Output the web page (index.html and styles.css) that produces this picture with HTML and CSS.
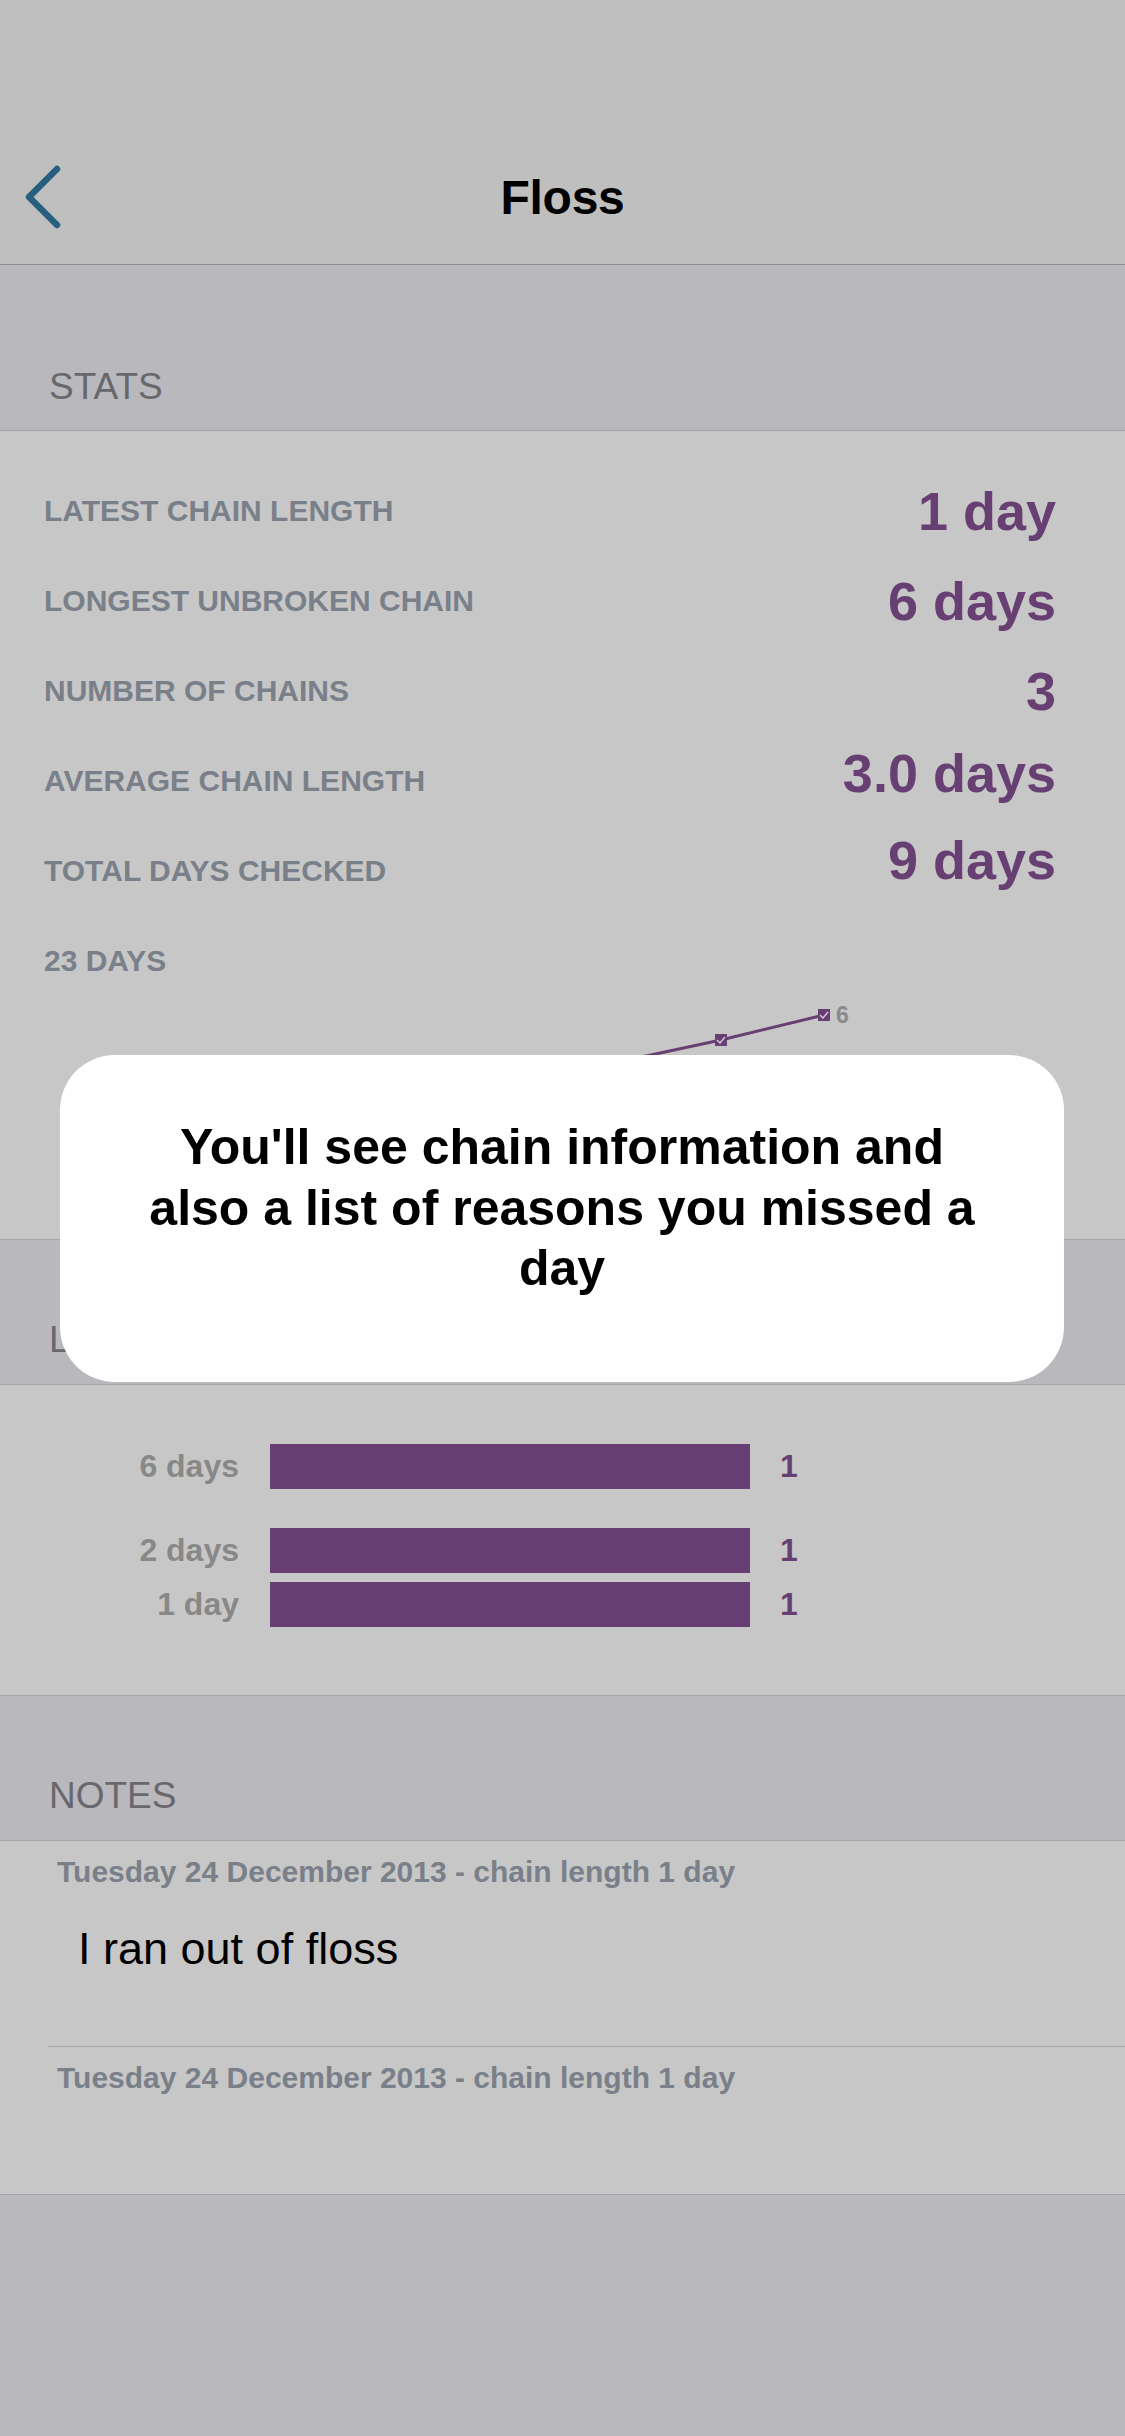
FILE: index.html
```html
<!DOCTYPE html>
<html lang="en">
<head>
<meta charset="utf-8">
<title>Floss</title>
<link rel="stylesheet" href="styles.css">
</head>
<body>
<div class="screen">
  <header class="nav">
    <div class="nav-bar">
      <svg class="back" width="40" height="70" viewBox="0 0 40 70" aria-hidden="true">
        <polyline points="32,6 4,34 32,62" fill="none" stroke="#27607f" stroke-width="6.5" stroke-linecap="round" stroke-linejoin="round"/>
      </svg>
      <h1 class="nav-title">Floss</h1>
    </div>
  </header>

  <section class="group">
    <div class="group-header group-header--first">STATS</div>
    <div class="group-body stats">
      <div class="stat-row"><span class="stat-label">LATEST CHAIN LENGTH</span><span class="stat-value">1 day</span></div>
      <div class="stat-row"><span class="stat-label">LONGEST UNBROKEN CHAIN</span><span class="stat-value">6 days</span></div>
      <div class="stat-row"><span class="stat-label">NUMBER OF CHAINS</span><span class="stat-value">3</span></div>
      <div class="stat-row"><span class="stat-label">AVERAGE CHAIN LENGTH</span><span class="stat-value stat-value--lift">3.0 days</span></div>
      <div class="stat-row"><span class="stat-label">TOTAL DAYS CHECKED</span><span class="stat-value stat-value--lift2">9 days</span></div>
      <div class="stat-row"><span class="stat-label">23 DAYS</span></div>
      <svg class="graph" width="1125" height="253" viewBox="0 0 1125 253" aria-hidden="true">
        <polyline points="100,220 200,190 310,160 412,132 515,104 618,76 721,54 824,29" fill="none" stroke="#683f73" stroke-width="3"/>
        <g fill="#683f73">
          <rect x="612" y="70" width="12" height="12"/>
          <rect x="715" y="48" width="12" height="12"/>
          <rect x="818" y="23" width="12" height="12"/>
        </g>
        <g fill="none" stroke="#d9d0dc" stroke-width="1.3">
          <polyline points="717,54 720,57 725,51"/>
          <polyline points="820,29 823,32 828,26"/>
        </g>
        <text x="836" y="37" class="graph-label">6</text>
      </svg>
    </div>
  </section>

  <section class="group">
    <div class="group-header">LENGTHS</div>
    <div class="group-body bars">
      <div class="bar-row">
        <span class="bar-label">6 days</span>
        <span class="bar-track"><span class="bar-fill" style="width:100%"></span></span>
        <span class="bar-count">1</span>
      </div>
      <div class="bar-row bar-row--gap">
        <span class="bar-label">2 days</span>
        <span class="bar-track"><span class="bar-fill" style="width:100%"></span></span>
        <span class="bar-count">1</span>
      </div>
      <div class="bar-row bar-row--tight">
        <span class="bar-label">1 day</span>
        <span class="bar-track"><span class="bar-fill" style="width:100%"></span></span>
        <span class="bar-count">1</span>
      </div>
    </div>
  </section>

  <section class="group">
    <div class="group-header">NOTES</div>
    <div class="group-body notes">
      <div class="note">
        <div class="note-title">Tuesday 24 December 2013 - chain length 1 day</div>
        <div class="note-text">I ran out of floss</div>
      </div>
      <div class="note note--empty">
        <div class="note-title">Tuesday 24 December 2013 - chain length 1 day</div>
      </div>
    </div>
  </section>

  <div class="modal">
    <p class="modal-text">You'll see chain information and also a list of reasons you missed a day</p>
  </div>
</div>
</body>
</html>
```

FILE: styles.css
```css
html, body {
  margin: 0;
  padding: 0;
}

body {
  background: #b9b8bd;
  font-family: "Liberation Sans", Arial, sans-serif;
  width: 1125px;
  min-height: 2436px;
}

.screen {
  position: relative;
  width: 1125px;
  min-height: 2436px;
}

/* Navigation */
.nav {
  background: #bfbfbf;
  padding-top: 132px;
  border-bottom: 1px solid #8c8c8c;
}

.nav-bar {
  height: 132px;
  display: flex;
  align-items: center;
  justify-content: center;
  position: relative;
}

.back {
  position: absolute;
  left: 25px;
  top: 31px;
}

.nav-title {
  margin: 0;
  font-size: 48px;
  font-weight: 700;
  color: #000;
  line-height: 1;
  letter-spacing: -0.3px;
}

/* Groups */
.group-header {
  height: 144px;
  box-sizing: border-box;
  display: flex;
  align-items: flex-end;
  padding: 0 49px 22px;
  font-size: 37px;
  line-height: 44px;
  color: #68686c;
}

.group-header--first {
  height: 165px;
  padding-bottom: 21px;
}

.group-body {
  background: #c7c7c7;
  border-top: 1px solid #a3a3a7;
  border-bottom: 1px solid #a3a3a7;
}

/* Stats */
.stats {
  padding-top: 35px;
}

.stat-row {
  height: 90px;
  display: flex;
  align-items: center;
  justify-content: space-between;
  padding: 0 69px 0 44px;
}

.stat-label {
  font-size: 30px;
  font-weight: 700;
  color: #7a8089;
}

.stat-value {
  font-size: 54px;
  font-weight: 700;
  color: #683f73;
}

.stat-value--lift {
  margin-bottom: 16px;
}

.stat-value--lift2 {
  margin-bottom: 22px;
}

.graph {
  display: block;
  margin-top: -20px;
}

.graph-label {
  font-family: "Liberation Sans", Arial, sans-serif;
  font-size: 23px;
  font-weight: 700;
  fill: #8a8a8a;
}

/* Bars */
.bars {
  padding-top: 59px;
  box-sizing: border-box;
  height: 312px;
}

.bar-row {
  display: flex;
  align-items: center;
  height: 45px;
}

.bar-row--gap {
  margin-top: 39px;
}

.bar-row--tight {
  margin-top: 9px;
}

.bar-label {
  width: 239px;
  text-align: right;
  font-size: 32px;
  font-weight: 700;
  color: #888888;
}

.bar-track {
  display: block;
  width: 480px;
  height: 45px;
  margin-left: 31px;
}

.bar-fill {
  display: block;
  height: 100%;
  background: #683f73;
}

.bar-count {
  margin-left: 30px;
  font-size: 32px;
  font-weight: 700;
  color: #683f73;
}

/* Notes */
.notes {
  height: 355px;
  box-sizing: border-box;
}

.note {
  margin-left: 48px;
  padding: 13px 0 0 9px;
  height: 205px;
  box-sizing: border-box;
}

.note + .note {
  border-top: 1px solid #a3a3a7;
  height: 148px;
}

.note-title {
  font-size: 30px;
  line-height: 36px;
  font-weight: 700;
  color: #7a8089;
}

.note-text {
  margin-top: 33px;
  padding-left: 21px;
  font-size: 45px;
  line-height: 52px;
  color: #000;
}

/* Modal overlay */
.modal {
  position: absolute;
  left: 60px;
  top: 1055px;
  width: 1004px;
  height: 327px;
  box-sizing: border-box;
  background: #ffffff;
  border-radius: 55px;
  padding: 62px 75px 0;
}

.modal-text {
  margin: 0;
  text-align: center;
  font-size: 50px;
  line-height: 60.5px;
  font-weight: 700;
  color: #000;
}
```
